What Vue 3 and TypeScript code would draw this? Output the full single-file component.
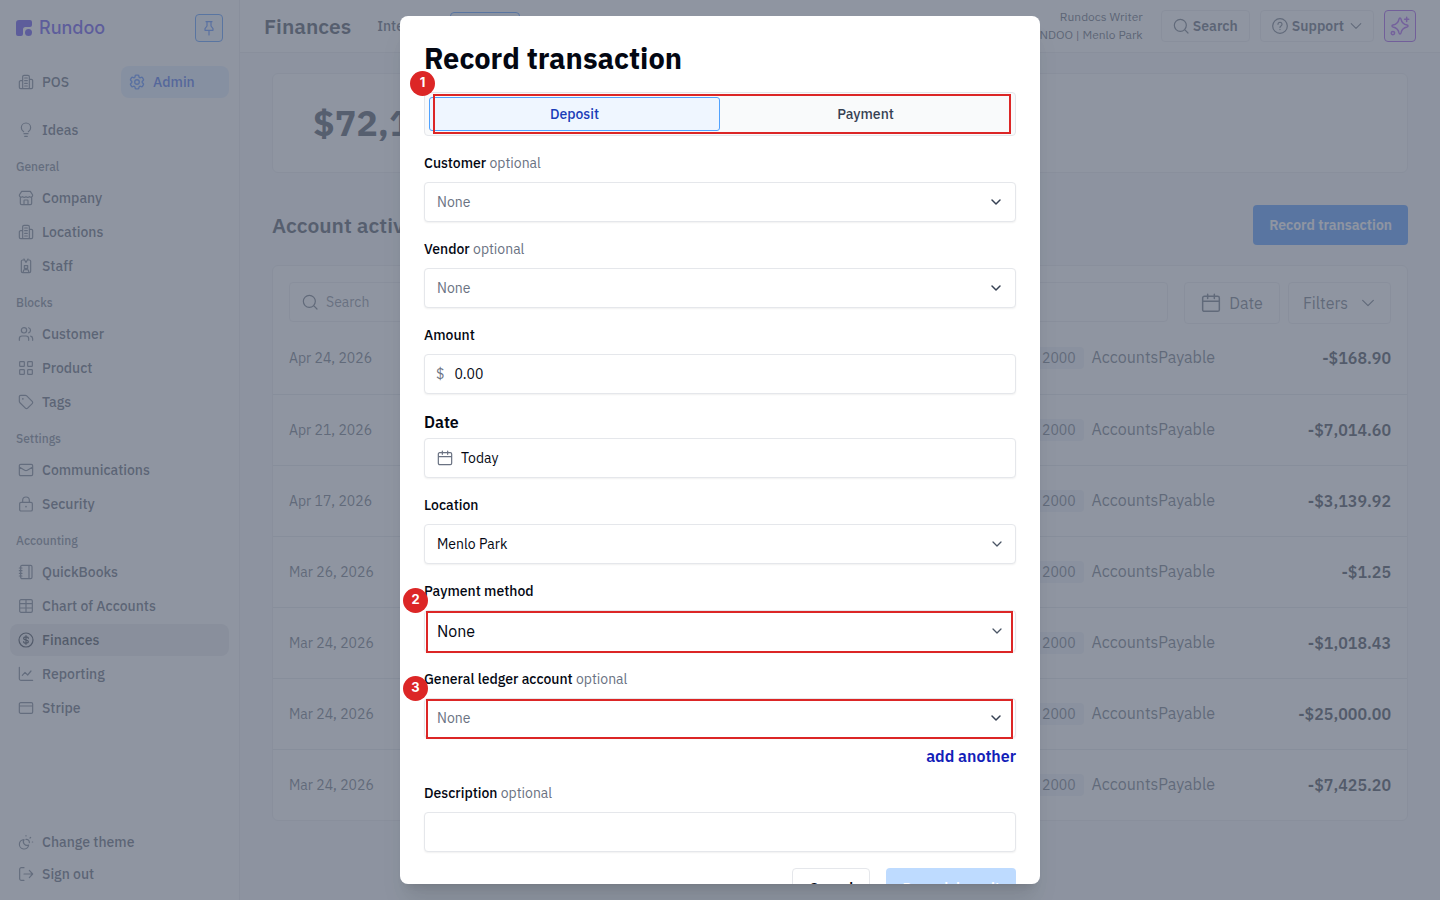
<script setup lang="ts">
import { ref } from 'vue'

interface NavItem { label: string; icon: string; active?: boolean }
interface NavSection { title: string; items: NavItem[] }
interface Activity { date: string; amount: string }

const icons: Record<string, string> = {
  building: 'M7 22V4a2 2 0 0 1 2-2h6a2 2 0 0 1 2 2v18M7 10H4a2 2 0 0 0-2 2v8a2 2 0 0 0 2 2h16a2 2 0 0 0 2-2V10a2 2 0 0 0-2-2h-3M10 6h4M10 10h4M10 14h4M10 18h4',
  bulb: 'M9 17.5h6M10 21.5h4M8.5 14.5C6.300 13 5 11.200 5 8.500a7 7 0 0 1 14 0c0 2.700-1.300 4.500-3.500 6',
  store: 'M5.500 2h13L22 7.500a3 3 0 0 1-5 2.500 3.500 3.500 0 0 1-5 0 3.500 3.500 0 0 1-5 0 3 3 0 0 1-5-2.500zM3.500 11v9a2 2 0 0 0 2 2h13a2 2 0 0 0 2-2v-9M9 22v-6a1 1 0 0 1 1-1h4a1 1 0 0 1 1 1v6',
  badge: 'M9 3H7a2 2 0 0 0-2 2v15a2 2 0 0 0 2 2h10a2 2 0 0 0 2-2V5a2 2 0 0 0-2-2h-1M9 1.500l3 5 3-5M9.500 11.500h5v4h-5zM8 21.500v-1.500a2.500 2.500 0 0 1 2.500-2.500h3A2.500 2.500 0 0 1 16 20v1.500',
  users: 'M13 6.500a4 4 0 1 1-8 0 4 4 0 0 1 8 0M2 21.500V19a4 4 0 0 1 4-4h6a4 4 0 0 1 4 4v2.500M16 2.700a4 4 0 0 1 0 7.600M22 21.500V19a4 4 0 0 0-3-3.900',
  grid: 'M3.500 2.500h5a1 1 0 0 1 1 1v5a1 1 0 0 1-1 1h-5a1 1 0 0 1-1-1v-5a1 1 0 0 1 1-1zM15.500 2.500h5a1 1 0 0 1 1 1v5a1 1 0 0 1-1 1h-5a1 1 0 0 1-1-1v-5a1 1 0 0 1 1-1zM3.500 14.500h5a1 1 0 0 1 1 1v5a1 1 0 0 1-1 1h-5a1 1 0 0 1-1-1v-5a1 1 0 0 1 1-1zM15.500 14.500h5a1 1 0 0 1 1 1v5a1 1 0 0 1-1 1h-5a1 1 0 0 1-1-1v-5a1 1 0 0 1 1-1z',
  tag: 'M2 4v7a3 3 0 0 0 .9 2.100l8.200 8.200a2.400 2.400 0 0 0 3.400 0l6.800-6.800a2.400 2.400 0 0 0 0-3.400L13.100 2.900A3 3 0 0 0 11 2H4a2 2 0 0 0-2 2zM7 7h.6v.6H7z',
  mail: 'M4 3.500h16a2 2 0 0 1 2 2v13a2 2 0 0 1-2 2H4a2 2 0 0 1-2-2v-13a2 2 0 0 1 2-2zM2.500 8l7.500 4.500a4 4 0 0 0 4 0L21.500 8',
  lock: 'M4.500 9.500h15a2 2 0 0 1 2 2v9a2 2 0 0 1-2 2h-15a2 2 0 0 1-2-2v-9a2 2 0 0 1 2-2zM7 9.500V6.500a5 5 0 0 1 10 0v3M11.700 15.700h.6v.6h-.6z',
  notebook: 'M6 2h13a2 2 0 0 1 2 2v16a2 2 0 0 1-2 2H6a2 2 0 0 1-2-2V4a2 2 0 0 1 2-2zM16.500 2v20M2 6h4M2 10h4M2 14h4M2 18h4',
  table: 'M4.500 2.500h15a2 2 0 0 1 2 2v15a2 2 0 0 1-2 2h-15a2 2 0 0 1-2-2v-15a2 2 0 0 1 2-2zM2.500 8.500h19M2.500 15h19M12 2.500v19',
  dollar: 'M22.500 12a10.500 10.500 0 1 1-21 0 10.500 10.500 0 0 1 21 0M15.500 9.500C15.500 8 14 7.300 12 7.300S8.500 8 8.500 9.700 10 11.700 12 12s3.500.8 3.500 2.400-1.500 2.400-3.500 2.400-3.500-.8-3.500-2.300M12 5.500v13',
  chart: 'M2 2v17a2.500 2.500 0 0 0 2.500 2.500H22M6.500 14l4-4.500 4 4 5-6',
  card: 'M4 4h16a2 2 0 0 1 2 2v12a2 2 0 0 1-2 2H4a2 2 0 0 1-2-2V6a2 2 0 0 1 2-2zM2 9h20',
  theme: 'M9 8.500a7 7 0 1 0 7 8 5.500 5.500 0 0 1-7-8zM12 8a4.500 4.500 0 0 1 5 5M12 2.500v.500M18 6l1-1M21.500 12h.500',
  signout: 'M9 2.500H5a2.500 2.500 0 0 0-2.500 2.500v14A2.500 2.500 0 0 0 5 21.500h4M9 12h13M17 6.500l5 5.500-5 5.500',
  search: 'M20 11a9 9 0 1 1-18 0 9 9 0 0 1 18 0M17.500 17.500l5 5',
  help: 'M23 12a11 11 0 1 1-22 0 11 11 0 0 1 22 0M9 9.500a3 3 0 1 1 4.500 2.600c-1 .6-1.500 1-1.500 2M12 17v.300',
  chevron: 'M4 8l8 8 8-8',
  calendar: 'M4 4h16a2 2 0 0 1 2 2v14a2 2 0 0 1-2 2H4a2 2 0 0 1-2-2V6a2 2 0 0 1 2-2zM2 10h20M8 1.500v5M16 1.500v5',
  pin: 'M7.500 2.500h9M9 2.500v6.500l-3 4V15.500h12v-2.500l-3-4V2.500M12 15.500v7',
  gear: 'M9.594 3.94c.09-.542.56-.94 1.11-.94h2.593c.55 0 1.02.398 1.11.94l.213 1.281c.063.374.313.686.645.87.074.04.147.083.22.127.325.196.72.257 1.075.124l1.217-.456a1.125 1.125 0 0 1 1.37.49l1.296 2.247a1.125 1.125 0 0 1-.26 1.431l-1.003.827c-.293.241-.438.613-.43.992a7.723 7.723 0 0 1 0 .255c-.008.378.137.75.43.991l1.004.827c.424.35.534.955.26 1.43l-1.298 2.247a1.125 1.125 0 0 1-1.369.491l-1.217-.456c-.355-.133-.75-.072-1.076.124a6.47 6.47 0 0 1-.22.128c-.331.183-.581.495-.644.869l-.213 1.281c-.09.543-.56.94-1.11.94h-2.594c-.55 0-1.019-.398-1.11-.94l-.213-1.281c-.062-.374-.312-.686-.644-.87a6.52 6.52 0 0 1-.22-.127c-.325-.196-.72-.257-1.076-.124l-1.217.456a1.125 1.125 0 0 1-1.369-.49l-1.297-2.247a1.125 1.125 0 0 1 .26-1.431l1.004-.827c.292-.24.437-.613.43-.991a6.932 6.932 0 0 1 0-.255c.007-.38-.138-.751-.43-.992l-1.004-.827a1.125 1.125 0 0 1-.26-1.43l1.297-2.247a1.125 1.125 0 0 1 1.37-.491l1.216.456c.356.133.751.072 1.076-.124.072-.044.146-.086.22-.128.332-.183.582-.495.644-.869l.214-1.28ZM15 12a3 3 0 1 1-6 0 3 3 0 0 1 6 0Z',
  sparkle: 'M12 2.500c.8 0 1 .4 1.200 1.200.9 4.500 2.500 6.200 7.200 7.100.9.200 1.200.5 1.200 1.200s-.3 1-1.200 1.200c-4.700.9-6.300 2.600-7.200 7.100-.2.800-.4 1.200-1.200 1.200s-1-.4-1.200-1.200c-.9-4.500-2.500-6.200-7.200-7.100-.9-.2-1.200-.5-1.200-1.200s.3-1 1.200-1.200c4.700-.9 6.300-2.600 7.200-7.100.2-.8.4-1.200 1.200-1.200zM20 1.500v5M17.500 4h5M5.500 20.500a2 2 0 1 1-4 0 2 2 0 0 1 4 0',
}

const sections: NavSection[] = [
  { title: 'General', items: [
    { label: 'Company', icon: 'store' },
    { label: 'Locations', icon: 'building' },
    { label: 'Staff', icon: 'badge' },
  ] },
  { title: 'Blocks', items: [
    { label: 'Customer', icon: 'users' },
    { label: 'Product', icon: 'grid' },
    { label: 'Tags', icon: 'tag' },
  ] },
  { title: 'Settings', items: [
    { label: 'Communications', icon: 'mail' },
    { label: 'Security', icon: 'lock' },
  ] },
  { title: 'Accounting', items: [
    { label: 'QuickBooks', icon: 'notebook' },
    { label: 'Chart of Accounts', icon: 'table' },
    { label: 'Finances', icon: 'dollar', active: true },
    { label: 'Reporting', icon: 'chart' },
    { label: 'Stripe', icon: 'card' },
  ] },
]

const activity: Activity[] = [
  { date: 'Apr 24, 2026', amount: '-$168.90' },
  { date: 'Apr 21, 2026', amount: '-$7,014.60' },
  { date: 'Apr 17, 2026', amount: '-$3,139.92' },
  { date: 'Mar 26, 2026', amount: '-$1.25' },
  { date: 'Mar 24, 2026', amount: '-$1,018.43' },
  { date: 'Mar 24, 2026', amount: '-$25,000.00' },
  { date: 'Mar 24, 2026', amount: '-$7,425.20' },
]

const kind = ref<'Deposit' | 'Payment'>('Deposit')
const amount = ref('0.00')
const description = ref('')
</script>

<template>
  <div class="app">
    <aside class="sidebar">
      <div class="brand-row">
        <a class="brand" href="#">
          <svg class="logo" viewBox="0 0 16 16" aria-hidden="true">
            <path d="M3 0h11a2 2 0 0 1 2 2v3a2 2 0 0 1-2 2H9.500A2.500 2.500 0 0 0 7 9.500V14a2 2 0 0 1-2 2H2a2 2 0 0 1-2-2V3a3 3 0 0 1 3-3z" />
            <circle cx="12.500" cy="12.500" r="3.500" />
          </svg>
          <span>Rundoo</span>
        </a>
        <button class="pin" type="button" aria-label="Pin sidebar">
          <svg class="icon" viewBox="0 0 24 24"><path :d="icons.pin" /></svg>
        </button>
      </div>
      <div class="modes">
        <a class="nav-item" href="#"><svg class="icon" viewBox="0 0 24 24"><path :d="icons.building" /></svg>POS</a>
        <a class="nav-item admin" href="#"><svg class="icon" viewBox="1.500 1.500 21 21"><path :d="icons.gear" /></svg>Admin</a>
      </div>
      <nav class="nav">
        <a class="nav-item" href="#"><svg class="icon" viewBox="0 0 24 24"><path :d="icons.bulb" /></svg>Ideas</a>
        <section v-for="s in sections" :key="s.title" class="nav-section">
          <h2 class="nav-title">{{ s.title }}</h2>
          <a v-for="item in s.items" :key="item.label" class="nav-item" :class="{ active: item.active }" href="#">
            <svg class="icon" viewBox="0 0 24 24"><path :d="icons[item.icon]" /></svg>{{ item.label }}
          </a>
        </section>
      </nav>
      <div class="nav-foot">
        <a class="nav-item" href="#"><svg class="icon" viewBox="0 0 24 24"><path :d="icons.theme" /></svg>Change theme</a>
        <a class="nav-item" href="#"><svg class="icon" viewBox="0 0 24 24"><path :d="icons.signout" /></svg>Sign out</a>
      </div>
    </aside>

    <div class="page">
      <header class="topbar">
        <h1 class="page-title">Finances</h1>
        <a class="tab" href="#">Internal</a>
        <a class="tab tab-active" href="#">Ledger</a>
        <div class="user">
          <span>Rundocs Writer</span>
          <span>RUNDOO | Menlo Park</span>
        </div>
        <button class="top-btn" type="button"><svg class="icon" viewBox="0 0 24 24"><path :d="icons.search" /></svg>Search</button>
        <button class="top-btn" type="button">
          <svg class="icon" viewBox="0 0 24 24"><path :d="icons.help" /></svg>Support
          <svg class="icon chev" viewBox="2 2 20 20"><path :d="icons.chevron" /></svg>
        </button>
        <button class="ai-btn" type="button" aria-label="Assistant"><svg class="icon icon-20" viewBox="0 0 24 24"><path :d="icons.sparkle" /></svg></button>
      </header>

      <main class="content">
        <section class="balance">$72,184.09</section>
        <div class="heading-row">
          <h2 class="section-title">Account activity</h2>
          <button class="primary" type="button">Record transaction</button>
        </div>
        <section class="panel">
          <div class="filters">
            <label class="search">
              <svg class="icon" viewBox="0 0 24 24"><path :d="icons.search" /></svg>
              <input type="search" placeholder="Search" aria-label="Search activity" />
            </label>
            <div class="filter-btns">
              <button class="filter-btn" type="button"><svg class="icon icon-20" viewBox="0 0 24 24"><path :d="icons.calendar" /></svg>Date</button>
              <button class="filter-btn wide" type="button">Filters<svg class="icon" viewBox="0 0 24 24"><path :d="icons.chevron" /></svg></button>
            </div>
          </div>
          <table class="rows">
            <colgroup><col class="c-date" /><col /><col class="c-account" /><col class="c-amount" /></colgroup>
            <tbody>
              <tr v-for="(row, i) in activity" :key="i">
                <td class="date">{{ row.date }}</td>
                <td></td>
                <td class="account"><span class="code">2000</span>AccountsPayable</td>
                <td class="amount">{{ row.amount }}</td>
              </tr>
            </tbody>
          </table>
        </section>
      </main>
    </div>

    <div class="overlay">
      <form class="modal" role="dialog" aria-labelledby="dialog-title" @submit.prevent>
        <h2 id="dialog-title" class="modal-title">Record transaction</h2>

        <div class="anchor">
          <div class="segmented" role="group" aria-label="Transaction type">
            <button type="button" :class="{ on: kind === 'Deposit' }" @click="kind = 'Deposit'">Deposit</button>
            <button type="button" :class="{ on: kind === 'Payment' }" @click="kind = 'Payment'">Payment</button>
          </div>
          <span class="mark mark-top"></span>
          <span class="step step-top">1</span>
        </div>

        <div class="field">
          <label for="customer">Customer <span class="optional">optional</span></label>
          <div class="anchor">
            <select id="customer" class="control muted"><option>None</option></select>
            <svg class="caret strong" viewBox="0 0 24 24"><path :d="icons.chevron" /></svg>
          </div>
        </div>

        <div class="field">
          <label for="vendor">Vendor <span class="optional">optional</span></label>
          <div class="anchor">
            <select id="vendor" class="control muted"><option>None</option></select>
            <svg class="caret strong" viewBox="0 0 24 24"><path :d="icons.chevron" /></svg>
          </div>
        </div>

        <div class="field">
          <label for="amount">Amount</label>
          <div class="control combo money">
            <span class="currency">$</span>
            <input id="amount" v-model="amount" type="text" inputmode="decimal" />
          </div>
        </div>

        <div class="field date-field">
          <label for="date">Date</label>
          <button id="date" class="control combo date-btn" type="button">
            <svg class="icon" viewBox="0 0 24 24"><path :d="icons.calendar" /></svg>Today
          </button>
        </div>

        <div class="field">
          <label for="location">Location</label>
          <div class="anchor">
            <select id="location" class="control"><option>Menlo Park</option></select>
            <svg class="caret" viewBox="0 0 24 24"><path :d="icons.chevron" /></svg>
          </div>
        </div>

        <div class="field">
          <label for="method">Payment method</label>
          <div class="anchor">
            <select id="method" class="control large"><option>None</option></select>
            <svg class="caret" viewBox="0 0 24 24"><path :d="icons.chevron" /></svg>
            <span class="mark"></span>
            <span class="step">2</span>
          </div>
        </div>

        <div class="field">
          <label for="ledger">General ledger account <span class="optional">optional</span></label>
          <div class="anchor">
            <select id="ledger" class="control muted"><option>None</option></select>
            <svg class="caret strong" viewBox="0 0 24 24"><path :d="icons.chevron" /></svg>
            <span class="mark"></span>
            <span class="step">3</span>
          </div>
          <button class="add" type="button">add another</button>
        </div>

        <div class="field">
          <label for="description">Description <span class="optional">optional</span></label>
          <input id="description" v-model="description" class="control" type="text" />
        </div>

        <div class="actions">
          <button class="cancel" type="button">Cancel</button>
          <button class="submit" type="submit" disabled>Record deposit</button>
        </div>
      </form>
    </div>
  </div>
</template>

<style>
body { margin: 0; }
</style>

<style scoped>
.app {
  display: grid;
  grid-template-columns: 240px minmax(0, 1fr);
  height: 100vh;
  overflow: hidden;
  background: #f6f8fa;
  color: #364153;
  font-family: "IBM Plex Sans", Roboto, "Noto Sans", sans-serif;
  font-size: 14px;
  line-height: 20px;
}
.app * { box-sizing: border-box; }
h1, h2 { margin: 0; }
a { color: inherit; text-decoration: none; }
button, input, select { font: inherit; color: inherit; margin: 0; }
button { cursor: pointer; }
.icon {
  flex: none;
  width: 16px;
  height: 16px;
  fill: none;
  stroke: currentColor;
  stroke-width: 1.800;
  stroke-linecap: round;
  stroke-linejoin: round;
}
.icon-20 { width: 20px; height: 20px; }

.sidebar {
  display: flex;
  flex-direction: column;
  padding: 14px 10px 10px;
  background: #fff;
  border-right: 1px solid #e5e7eb;
}
.brand-row { display: flex; align-items: center; justify-content: space-between; padding: 0 6px; }
.brand {
  display: flex;
  align-items: center;
  gap: 7px;
  color: #3a22e8;
  font-family: Inter, sans-serif;
  font-size: 18px;
  line-height: 28px;
  font-weight: 500;
}
.logo { width: 16px; height: 16px; fill: currentColor; }
.pin {
  display: grid;
  place-items: center;
  width: 28px;
  height: 28px;
  padding: 0;
  border: 1px solid #2b7fff;
  border-radius: 4px;
  background: #eff6ff;
  color: #2b6fff;
}
.modes { display: grid; grid-template-columns: 1fr 1fr; gap: 3px; margin: 24px 0 16px; }
.nav { flex: 1; }
.nav, .nav-section { display: flex; flex-direction: column; }
.nav-section { gap: 2px; }
.nav-item {
  display: flex;
  align-items: center;
  gap: 8px;
  height: 32px;
  padding: 0 8px;
  border-radius: 8px;
  font-weight: 500;
}
.nav-item .icon { color: #566274; }
.nav-item.active { background: #e5e7eb; color: #101828; }
.nav-item.active .icon { color: #101828; }
.nav-item.admin { background: #dbeafe; color: #1447e6; }
.nav-item.admin .icon { color: #2b6fff; }
.nav-title { padding: 13px 6px 5px; color: #566274; font-size: 12px; line-height: 16px; font-weight: 500; }

.page { display: flex; flex-direction: column; min-width: 0; }
.topbar {
  display: flex;
  align-items: center;
  height: 53px;
  padding: 0 24px;
  background: #fff;
  border-bottom: 1px solid #e5e7eb;
}
.page-title { margin-right: 13px; color: #1e2939; font-size: 21px; line-height: 32px; font-weight: 600; }
.tab { padding: 3px 12px; margin-right: 8px; border: 1px solid transparent; border-radius: 4px; font-weight: 500; }
.tab-active { background: #eff6ff; border-color: #2b7fff; color: #1447e6; }
.user { display: flex; flex-direction: column; margin: 0 18px 0 auto; text-align: right; font-size: 12px; line-height: 18px; }
.top-btn {
  display: flex;
  align-items: center;
  gap: 4px;
  height: 32px;
  margin-right: 10px;
  padding: 0 11px;
  border: 1px solid #e5e7eb;
  border-radius: 4px;
  background: #fff;
  font-weight: 600;
}
.top-btn .icon { color: #4a5565; }
.top-btn .chev { width: 12px; height: 12px; margin-left: 2px; }
.ai-btn {
  display: grid;
  place-items: center;
  width: 32px;
  height: 32px;
  padding: 0;
  border: 1px solid #8a2be2;
  border-radius: 4px;
  background: #f3efff;
  color: #9333ea;
}

.content { padding: 20px 32px; }
.balance {
  height: 100px;
  padding: 27px 40px;
  border: 1px solid #e5e7eb;
  border-radius: 6px;
  background: #fff;
  color: #1e2939;
  font-size: 36px;
  line-height: 44px;
  font-weight: 700;
}
.heading-row { display: flex; align-items: center; justify-content: space-between; margin: 32px 0 20px; }
.section-title { color: #1e2939; font-size: 21px; line-height: 32px; font-weight: 600; }
.primary { height: 40px; padding: 0 16px; border: 0; border-radius: 4px; background: #2b7fff; color: #fff; font-weight: 600; }
.panel { border: 1px solid #e5e7eb; border-radius: 6px; background: #fff; }
.filters { display: flex; align-items: flex-start; gap: 16px; height: 57px; padding: 16px 16px 0; }
.search {
  display: flex;
  flex: 1;
  align-items: center;
  gap: 8px;
  height: 40px;
  padding: 0 12px;
  border: 1px solid #e5e7eb;
  border-radius: 4px;
  color: #6a7282;
}
.search .icon { color: #4a5565; }
.search input { flex: 1; min-width: 0; padding: 0; border: 0; outline: 0; background: none; }
.search input::placeholder { color: #6a7282; opacity: 1; }
.filter-btns { display: flex; gap: 8px; }
.filter-btn {
  display: flex;
  align-items: center;
  justify-content: center;
  gap: 8px;
  width: 96px;
  height: 42px;
  padding: 0;
  border: 1px solid #e5e7eb;
  border-radius: 4px;
  background: #fff;
  font-size: 16px;
  color: #4a5565;
}
.filter-btn.wide { gap: 12px; width: 103px; }
.rows { width: 100%; table-layout: fixed; border-collapse: collapse; }
.rows td { height: 71px; padding: 0; border-bottom: 1px solid #dfe2e7; }
.rows tr:last-child td { border-bottom: 0; }
.c-date { width: 140px; }
.c-account { width: 216px; }
.c-amount { width: 157px; }
.rows .date { padding-left: 16px; color: #4a5565; }
.rows .account { color: #4a5565; font-size: 16px; white-space: nowrap; }
.code { display: inline-block; margin-right: 8px; padding: 1px 8px; border-radius: 4px; background: #e9edf5; font-size: 14px; }
.rows .amount { padding-right: 16px; color: #101828; font-size: 16px; font-weight: 600; text-align: right; }

.overlay {
  position: fixed;
  inset: 0;
  display: flex;
  justify-content: center;
  padding: 16px;
  background: rgba(106, 114, 130, 0.75);
}
.modal {
  display: flex;
  flex-direction: column;
  gap: 16px;
  width: 100%;
  max-width: 640px;
  padding: 24px;
  overflow-y: auto;
  scrollbar-width: none;
  border-radius: 8px;
  background: #fff;
  color: #030712;
  box-shadow: 0 20px 25px -5px rgba(0, 0, 0, 0.1), 0 8px 10px -6px rgba(0, 0, 0, 0.1);
}
.modal > * { flex: none; }
.modal-title { font-size: 29px; line-height: 36px; font-weight: 700; }
.anchor { position: relative; }
.segmented {
  display: grid;
  grid-template-columns: 1fr 1fr;
  height: 44px;
  padding: 4px;
  border: 1px solid #e5e7eb;
  border-radius: 4px;
  background: #f9fafb;
}
.segmented button { padding: 0; border: 1px solid transparent; border-radius: 3px; background: none; color: #364153; font-weight: 500; }
.segmented .on { border-color: #50a2ff; background: #eff6ff; color: #193cb8; }
.field { display: flex; flex-direction: column; gap: 8px; }
.field label { font-size: 14px; line-height: 22px; font-weight: 500; }
.field .optional { color: #6a7282; font-weight: 400; }
.date-field { gap: 4px; }
.date-field label { font-size: 16px; line-height: 24px; font-weight: 600; }
.control {
  display: block;
  width: 100%;
  height: 40px;
  padding: 0 12px;
  border: 1px solid #e5e7eb;
  border-radius: 4px;
  outline: 0;
  background: #fff;
  box-shadow: 0 1px 2px rgba(0, 0, 0, 0.06);
  font-size: 14px;
  appearance: none;
}
.control.muted { color: #6a7282; }
.control.large { height: 42px; font-size: 16px; }
.combo { display: flex; align-items: center; gap: 8px; }
.money { gap: 10px; padding: 0 11px; }
.date-btn .icon { color: #6a7282; }
.currency { color: #6a7282; }
.combo input { flex: 1; min-width: 0; padding: 0; border: 0; outline: 0; background: none; }
.caret {
  position: absolute;
  top: 0;
  bottom: 0;
  right: 13px;
  width: 12px;
  height: 12px;
  margin: auto 0;
  fill: none;
  stroke: #4a5565;
  stroke-width: 2.500;
  stroke-linecap: round;
  stroke-linejoin: round;
  pointer-events: none;
}
.caret.strong { right: 14px; stroke: #364153; stroke-width: 3; }
.mark {
  position: absolute;
  top: 1px;
  right: 3px;
  bottom: -1px;
  left: 2px;
  border: 2px solid #dc2626;
  pointer-events: none;
}
.mark-top { top: 2px; right: 5px; bottom: 2px; left: 9px; }
.step {
  position: absolute;
  top: -22px;
  left: -21px;
  width: 25px;
  height: 25px;
  border-radius: 50%;
  background: #dc2626;
  color: #fff;
  font-family: Inter, sans-serif;
  font-size: 13px;
  line-height: 23px;
  font-weight: 700;
  text-align: center;
}
.step-top { top: -21px; left: -14px; }
.add { align-self: flex-end; padding: 0; border: 0; background: none; color: #1220b8; font-size: 16px; line-height: 20px; font-weight: 600; }
.actions { display: flex; justify-content: flex-end; gap: 16px; }
.cancel, .submit { height: 40px; padding: 0 16px; border-radius: 4px; font-weight: 600; }
.cancel { border: 1px solid #e5e7eb; background: #fff; }
.submit { border: 0; background: #bedbff; color: #fff; }
</style>
